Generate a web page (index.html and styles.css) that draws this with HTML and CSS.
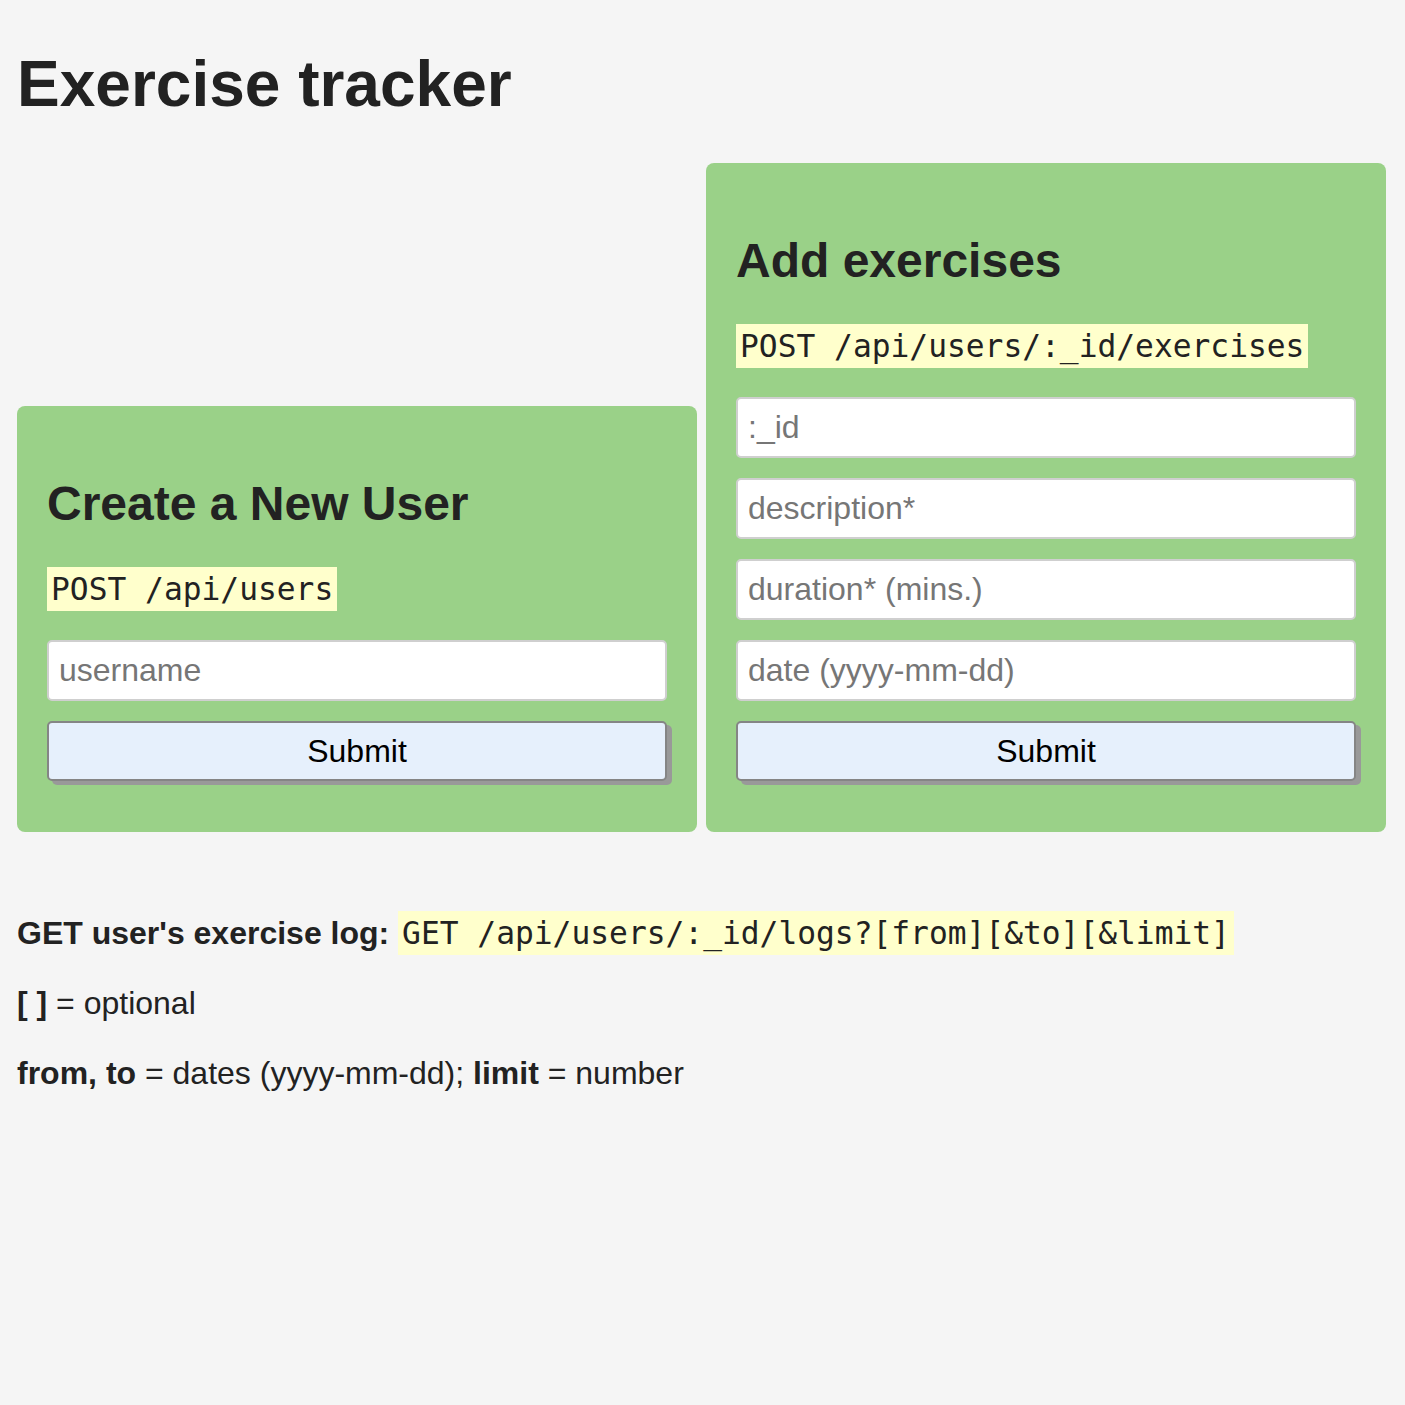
FILE: index.html
```html
<!DOCTYPE html>
<html lang="en">
<head>
<meta charset="utf-8">
<title>Exercise Tracker</title>
<link rel="stylesheet" href="styles.css">
</head>
<body>
<div class="container">
  <h1 class="title">Exercise tracker</h1>
  <div class="forms">
    <form class="card" action="/api/users" method="post">
      <h2 class="card-title">Create a New User</h2>
      <p class="endpoint"><code class="code">POST /api/users</code></p>
      <input class="field" type="text" name="username" placeholder="username">
      <input class="submit" type="submit" value="Submit">
    </form>
    <form class="card" method="post">
      <h2 class="card-title">Add exercises</h2>
      <p class="endpoint"><code class="code">POST /api/users/:_id/exercises</code></p>
      <input class="field" type="text" name=":_id" placeholder=":_id">
      <input class="field" type="text" name="description" placeholder="description*">
      <input class="field" type="text" name="duration" placeholder="duration* (mins.)">
      <input class="field" type="text" name="date" placeholder="date (yyyy-mm-dd)">
      <input class="submit" type="submit" value="Submit">
    </form>
  </div>
  <div class="info">
    <p class="line"><strong>GET user's exercise log:</strong> <code class="code">GET /api/users/:_id/logs?[from][&amp;to][&amp;limit]</code></p>
    <p class="line"><strong>[ ]</strong> = optional</p>
    <p class="line"><strong>from, to</strong> = dates (yyyy-mm-dd); <strong>limit</strong> = number</p>
  </div>
</div>
</body>
</html>
```

FILE: styles.css
```css
* {
  box-sizing: border-box;
}

html, body {
  margin: 0;
  padding: 0;
}

body {
  background: #f5f5f5;
  color: #222;
  font-family: "Liberation Sans", Arial, Helvetica, sans-serif;
  font-size: 32px;
}

.container {
  padding: 4px 17px 40px 17px;
}

.title {
  font-size: 64px;
  font-weight: bold;
  margin: 43px 0 42px 0;
}

.forms {
  display: flex;
  align-items: flex-end;
  gap: 9px;
}

.card {
  width: 680px;
  background: #9ad188;
  border-radius: 8px;
  padding: 31px 30px 31px 30px;
}

.card-title {
  font-size: 48px;
  font-weight: bold;
  margin: 39px 0 40px 0;
}

.endpoint {
  margin: 0 0 32px 0;
}

.code {
  font-family: "DejaVu Sans Mono", monospace;
  font-size: 31.25px;
  background: #ffffcc;
  padding: 4px 4px;
}

.field {
  display: block;
  width: 620px;
  height: 61px;
  margin: 0 0 20px 0;
  padding: 0 10px;
  border: 2px solid #cfcfcf;
  border-radius: 5px;
  background: #fff;
  font-family: "Liberation Sans", Arial, sans-serif;
  font-size: 32px;
  color: #222;
}

.field::placeholder {
  color: #767676;
}

.submit {
  display: block;
  width: 620px;
  height: 60px;
  margin: 0 0 20px 0;
  padding: 0;
  border: 2px solid #858585;
  border-radius: 5px;
  background: #e6f0fc;
  box-shadow: 5px 4px 0 #999;
  font-family: "Liberation Sans", Arial, sans-serif;
  font-size: 32px;
  color: #000;
}

.info {
  margin-top: 83px;
}

.line {
  margin: 0 0 33px 0;
}
```
